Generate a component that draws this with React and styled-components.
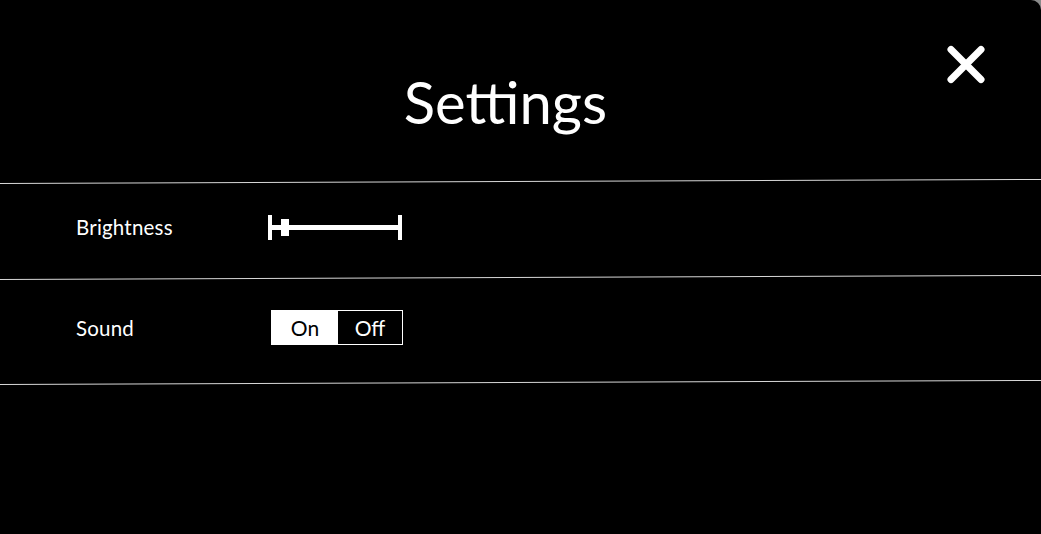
import React, { useState } from 'react';
import styled, { createGlobalStyle } from 'styled-components';

const GlobalStyle = createGlobalStyle`
  html, body {
    margin: 0;
    padding: 0;
    background: #8a8a8a;
  }
  body {
    font-family: Lato, "Noto Sans", sans-serif;
  }
`;

const Modal = styled.div`
  position: relative;
  width: 1041px;
  height: 534px;
  background: #000;
  color: #fff;
  border-top-right-radius: 10px;
  overflow: hidden;
`;

const Header = styled.div`
  height: 181px;
  display: flex;
  justify-content: center;
  box-sizing: border-box;
  padding: 73px 30px 0 0;
`;

const Title = styled.h1`
  margin: 0;
  font-size: 58px;
  font-weight: 400;
  line-height: 1;
`;

const CloseButton = styled.button`
  position: absolute;
  top: 44px;
  right: 55px;
  width: 40px;
  height: 41px;
  padding: 0;
  background: none;
  border: none;
  cursor: pointer;
  display: flex;
  align-items: center;
  justify-content: center;
`;

const Divider = styled.div`
  height: 1px;
  background: #d8d8d8;
  transform: rotate(-0.22deg);
`;

const Row = styled.div`
  display: grid;
  grid-template-columns: 192px 1fr;
  align-items: center;
  box-sizing: border-box;
  padding: 0 0 5px 76px;
  height: ${(p) => p.$h}px;
`;

const Label = styled.span`
  font-size: 20.5px;
  letter-spacing: 0.2px;
`;

const Slider = styled.div`
  position: relative;
  width: 134px;
  height: 25px;
  display: flex;
  align-items: center;
  justify-content: space-between;
`;

const Cap = styled.div`
  width: 4px;
  height: 25px;
  background: #fff;
`;

const Track = styled.div`
  flex: 1;
  height: 5px;
  background: #fff;
`;

const Thumb = styled.div`
  position: absolute;
  top: 4px;
  width: 8px;
  height: 17px;
  background: #fff;
`;

const Toggle = styled.div`
  display: flex;
  width: 132px;
  height: 35px;
  margin-left: 3px;
  box-sizing: border-box;
  border: 1px solid #fff;
`;

const ToggleOption = styled.button`
  flex: ${(p) => (p.$first ? '0 0 66px' : '1')};
  border: none;
  padding: 0;
  font-family: inherit;
  font-size: 21px;
  cursor: pointer;
  background: ${(p) => (p.$active ? '#fff' : '#000')};
  color: ${(p) => (p.$active ? '#000' : '#fff')};
`;

export default function App() {
  const [brightness] = useState(0.1);
  const [sound, setSound] = useState(true);

  return (
    <>
      <GlobalStyle />
      <Modal>
        <Header>
          <Title>Settings</Title>
        </Header>
        <CloseButton aria-label="Close">
          <svg width="40" height="41" viewBox="0 0 40 41">
            <path
              d="M5 5.5 L35 35.5 M35 5.5 L5 35.5"
              stroke="#fff"
              strokeWidth="7"
              strokeLinecap="round"
            />
          </svg>
        </CloseButton>
        <Divider />
        <Row $h={95}>
          <Label>Brightness</Label>
          <Slider>
            <Cap />
            <Track />
            <Cap />
            <Thumb style={{ left: `${4 + brightness * 90}px` }} />
          </Slider>
        </Row>
        <Divider />
        <Row $h={104}>
          <Label>Sound</Label>
          <Toggle>
            <ToggleOption $first $active={sound} onClick={() => setSound(true)}>
              On
            </ToggleOption>
            <ToggleOption $active={!sound} onClick={() => setSound(false)}>
              Off
            </ToggleOption>
          </Toggle>
        </Row>
        <Divider />
      </Modal>
    </>
  );
}
